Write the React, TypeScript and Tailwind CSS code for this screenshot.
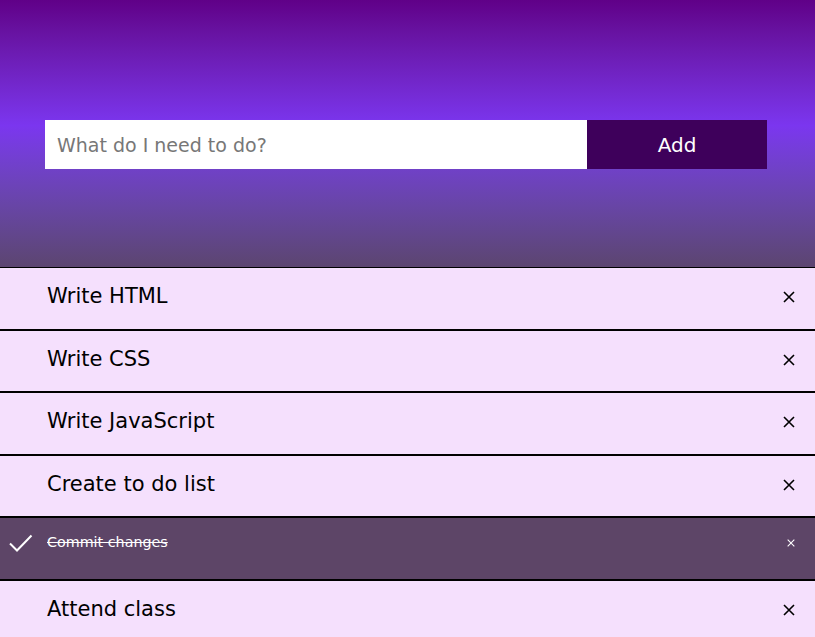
import React from "react"

type Todo = { text: string; done?: boolean }

const todos: Todo[] = [
  { text: "Write HTML" },
  { text: "Write CSS" },
  { text: "Write JavaScript" },
  { text: "Create to do list" },
  { text: "Commit changes", done: true },
  { text: "Attend class" },
]

function Cross({ size, color }: { size: number; color: string }) {
  return (
    <svg width={size} height={size} viewBox="0 0 12 12" fill="none">
      <path d="M1 1L11 11M11 1L1 11" stroke={color} strokeWidth="1.6" />
    </svg>
  )
}

function Check() {
  return (
    <svg width="26" height="20" viewBox="0 0 26 20" fill="none">
      <path d="M2 9.5L9 16.5L23.5 1.5" stroke="#fff" strokeWidth="2" />
    </svg>
  )
}

export default function App() {
  return (
    <div className="w-[815px] h-[637px] overflow-hidden bg-[#f5e0fd]" style={{ fontFamily: "'DejaVu Sans', Verdana, sans-serif" }}>
      {/* header */}
      <header className="h-[267px] pt-[120px] pl-[45px] pr-[48px] bg-gradient-to-b from-[#600088] via-[#7b36ef] via-47% to-[#5c4570]">
        <div className="flex h-[49px]">
          <input
            className="flex-1 h-full bg-white pl-3 text-[19px] text-black placeholder:text-[#777] outline-none"
            placeholder="What do I need to do?"
          />
          <button className="w-[180px] h-full bg-[#3e005b] text-white text-[20px]">Add</button>
        </div>
      </header>

      <ul>
        {todos.map((t) =>
          t.done ? (
            <li key={t.text} className="relative h-[62.5px] border-y border-black bg-[#5d4567] flex items-start">
              <span className="absolute left-[8px] top-[16px]">
                <Check />
              </span>
              <span className="pl-[47px] pt-[14px] text-[14.3px] text-white line-through">{t.text}</span>
              <span className="absolute right-[20px] top-[21px]">
                <Cross size={8} color="#fff" />
              </span>
            </li>
          ) : (
            <li key={t.text} className="h-[62.5px] border-y border-black flex items-center justify-between pl-[47px] pr-[20px]">
              <span className="text-[21px] text-black pb-[3px]">{t.text}</span>
              <span className="pb-[2px]">
                <Cross size={12} color="#000" />
              </span>
            </li>
          )
        )}
      </ul>
    </div>
  )
}
